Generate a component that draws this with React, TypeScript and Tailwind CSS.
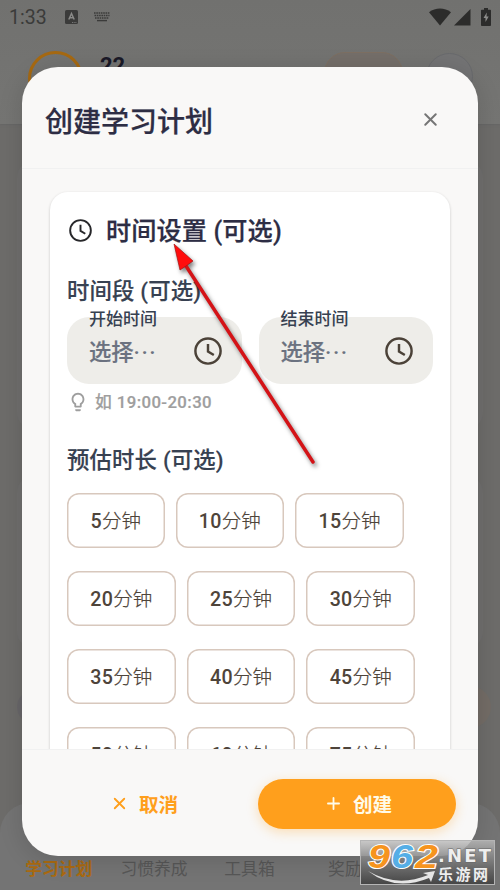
import { Plus, X } from 'lucide-react';
import { MdLightbulbOutline } from 'react-icons/md';

const durations = [
  ['5', '10', '15'],
  ['20', '25', '30'],
  ['35', '40', '45'],
  ['50', '60', '75'],
];

const tabs = ['学习计划', '习惯养成', '工具箱', '奖励', '我的'];

function ClockIcon({ className, stroke = 2 }: { className?: string; stroke?: number }) {
  return (
    <svg viewBox="0 0 24 24" fill="none" stroke="currentColor" strokeWidth={stroke} className={className}>
      <circle cx="12" cy="12" r="10.8" />
      <path d="M12 6v6.400l5 3" />
    </svg>
  );
}

function StatusBar() {
  return (
    <div className="flex h-[34px] items-center pl-[9px] pr-[9px] text-[#3b3b3a]">
      <span className="mt-px w-[56px] text-[19.500px] leading-none">1:33</span>
      <svg width="13" height="14" viewBox="0 0 13 14">
        <rect width="13" height="14" rx="1.5" fill="currentColor" />
        <path d="M3.800 9.500 6.500 3.500 9.200 9.500M4.800 7.800h3.400" fill="none" stroke="#8a8a88" strokeWidth="1.5" />
        <path d="M7 12.500h5" stroke="#777" strokeWidth="1" strokeDasharray="1 .7" />
      </svg>
      <svg width="18" height="10" viewBox="0 0 18 10" className="ml-[15px]">
        <path d="M1 1h16M1.500 3.500h15M2 6h14" stroke="currentColor" strokeWidth="1.7" strokeDasharray="1.6 .7" />
        <path d="M4 8.600h10" stroke="currentColor" strokeWidth="1.4" />
      </svg>
      <div className="ml-auto flex items-center text-[#2c2c2b]">
        <svg width="22" height="18" viewBox="0 0 22 18">
          <path d="M0 4.200C6.500-.8 15.500-.8 22 4.200L11 17.500Z" fill="currentColor" />
        </svg>
        <svg width="17" height="17" viewBox="0 0 17 17" className="ml-[3px]">
          <path d="M0 16.500 16.500 0v16.500Z" fill="currentColor" />
        </svg>
        <svg width="10" height="18" viewBox="0 0 10 18" className="ml-[10px]">
          <path d="M3 0h4v1.700h2.200q.8 0 .8.8V17q0 1-.8 1H.8Q0 18 0 17V2.500q0-.8.8-.8H3Z" fill="currentColor" />
          <path d="M5.800 4.500 2.500 10h2v4L7.700 8.500H5.500Z" fill="#8d8d8b" />
        </svg>
      </div>
    </div>
  );
}

function Background() {
  return (
    <div className="flex h-full flex-col bg-[#6d6c6a]">
      <header className="h-[124px] shrink-0 bg-linear-to-b from-[#71716f] to-[#757573] shadow-[0_1px_2px_#666]">
        <StatusBar />
        <div className="flex pl-[28px] pr-[27px] pt-[17px]">
          <div className="size-[55px] rounded-full border-[3px] border-[#a66912]" />
          <div className="ml-[17px] mt-[2px] text-[22px] font-bold leading-[26px] text-[#1a1927]">22</div>
          <div className="ml-auto mt-px h-[42px] w-[79px] rounded-full border border-[#7d6f62] bg-[#746e69]" />
          <div className="ml-[23px] mt-[2px] size-[47px] rounded-full border border-[#696a6d] bg-[#737374]" />
        </div>
      </header>
      <main className="flex flex-1 flex-col px-[17px] pt-[36px]">
        <div className="h-[270px] rounded-[18px] bg-[#706f6e]" />
        <div className="mt-[45px] h-[174px] rounded-[18px] bg-[#706f6e]" />
        <div className="-mr-[8px] mt-[37px] flex items-center justify-between">
          <div className="size-[34px] rounded-full bg-[#686669]" />
          <div className="size-[42px] rounded-full bg-[#736c66]" />
        </div>
      </main>
      <nav className="grid h-[87px] shrink-0 grid-cols-5 items-end rounded-t-[30px] bg-[#747474] pb-[9px] pl-[11px] pr-[12px] text-center text-[16.800px] leading-[24px] text-[#575757]">
        {tabs.map((tab, i) => (
          <span key={tab} className={i === 0 ? 'font-bold text-[#aa6a10]' : ''}>{tab}</span>
        ))}
      </nav>
    </div>
  );
}

function TimeField({ label }: { label: string }) {
  return (
    <div className="relative flex h-[67px] w-[175px] items-center justify-between rounded-[22px] bg-[#eeede9] pl-[22px] pr-[20px]">
      <span className="absolute -top-[10px] left-[22px] text-[17px] font-medium leading-[24px] text-[#374151]">{label}</span>
      <span className="mt-[3px] text-[22.300px] font-medium leading-[30px] text-[#6b7280] [-webkit-text-stroke:0.2px]">
        选择<span className="tracking-[1.500px] [-webkit-text-stroke:0]">···</span>
      </span>
      <ClockIcon className="size-[28px] text-[#4b4238]" stroke={2.100} />
    </div>
  );
}

// site badge in the bottom right corner
function SiteBadge() {
  return (
    <div className="absolute left-[360px] top-[840px] h-[45px] w-[135px] border border-[#b5b5b5] bg-linear-to-b from-[#bbbbbb]/80 to-[#464646]">
      <svg width="133" height="43" viewBox="0 0 133 43">
        <path d="M7 30q29 17 60 4l-5-2 12-2-4 11-2-4Q34 51 7 30Z" fill="#e5e5e5" />
        <g fontFamily="Liberation Sans" fontWeight="bold" fontStyle="italic" fontSize="33" stroke="#fff" strokeWidth="2" paintOrder="stroke">
          <text x="7" y="27" fill="#f6941e" textLength="22" lengthAdjust="spacingAndGlyphs">9</text>
          <text x="30" y="27" fill="#55aee6" textLength="22" lengthAdjust="spacingAndGlyphs">6</text>
          <text x="54" y="27" fill="#f6941e" textLength="23" lengthAdjust="spacingAndGlyphs">2</text>
        </g>
        <text x="77" y="21" fill="#eee" fontFamily="DejaVu Sans" fontWeight="bold" fontSize="18" textLength="53" stroke="#666" strokeWidth="1" paintOrder="stroke">.NET</text>
        <text x="77" y="39" fill="#eee" fontFamily="Noto Sans CJK SC" fontWeight="bold" fontSize="15" textLength="50">乐游网</text>
      </svg>
    </div>
  );
}

export default function App() {
  return (
    <div className="relative h-[890px] w-[500px] overflow-hidden font-['Roboto','Noto_Sans_CJK_SC',sans-serif]">
      <Background />

      {/* Create plan dialog */}
      <div className="absolute left-[22px] top-[67px] flex h-[789px] w-[456px] flex-col overflow-hidden rounded-[36px] bg-[#f9f8f7] shadow-[0_4px_24px_rgba(0,0,0,0.14)]">
        <div className="flex h-[102px] shrink-0 items-center justify-between border-b border-[#f1f1f1] pl-[23px] pr-[37px]">
          <h1 className="mt-[11px] text-[28px] font-medium leading-[40px] text-[#2d2d44] [-webkit-text-stroke:0.25px]">创建学习计划</h1>
          <X className="mt-[4px] size-[21px] text-[#757575]" strokeWidth={2.300} />
        </div>

        <div className="flex-1 overflow-hidden px-[28px] pt-[23px]">
          <section className="h-[620px] rounded-[18px] bg-white px-[17px] shadow-[0_1px_3px_rgba(0,0,0,0.2)]">
            <div className="flex h-[76px] items-center gap-[14px] pl-[2px]">
              <ClockIcon className="size-[23px] text-[#27272a]" stroke={2} />
              <h2 className="mt-[3px] text-[25.200px] font-medium leading-[36px] tracking-[0.1px] text-[#2d2d44] [-webkit-text-stroke:0.25px]">时间设置 (可选)</h2>
            </div>
            <h3 className="mt-[6px] text-[22.400px] font-medium leading-[34px] tracking-[0.150px] text-[#374151] [-webkit-text-stroke:0.150px]">时间段 (可选)</h3>
            <div className="mt-[9px] flex gap-[17px]">
              <TimeField label="开始时间" />
              <TimeField label="结束时间" />
            </div>
            <div className="mt-[6px] flex h-[24px] items-center text-[#9e9e9e]">
              <MdLightbulbOutline className="size-[22px]" />
              <span className="ml-[6px] text-[16.800px] font-medium leading-[24px] tracking-[0.4px] [-webkit-text-stroke:0.2px]">如 19:00-20:30</span>
            </div>
            <h3 className="mt-[29px] text-[22.400px] font-medium leading-[34px] tracking-[0.150px] text-[#374151] [-webkit-text-stroke:0.150px]">预估时长 (可选)</h3>
            <div className="mt-[16px] flex flex-col gap-[23px]">
              {durations.map((row) => (
                <div key={row[0]} className="flex gap-[11px]">
                  {row.map((m) => (
                    <button
                      key={m}
                      className={`h-[55px] rounded-[12px] pt-[2px] text-[19.600px] font-medium text-[#4e443a] shadow-[inset_0_0_0_1.500px_#d8c8bd] ${m === '5' ? 'w-[97.500px]' : 'w-[108.700px]'}`}
                    >
                      <span className="tracking-[0.3px]">{m}</span><span className="font-light [-webkit-text-stroke:0.2px]">分钟</span>
                    </button>
                  ))}
                </div>
              ))}
            </div>
          </section>
        </div>

        <div className="flex h-[107px] shrink-0 items-center gap-[17px] border-t border-[#f1f1f1] pl-[25px] pr-[22px] pt-px text-[19.600px] font-bold">
          <button className="flex h-[50px] flex-1 items-center justify-center gap-[10px] text-[#ff9f1c]">
            <X className="size-[19px]" strokeWidth={2.3} />
            <span className="mt-[5px]">取消</span>
          </button>
          <button className="flex h-[50px] w-[198px] items-center justify-center gap-[10px] rounded-full bg-[#ff9f1c] pl-[2px] text-[#fffbe8] shadow-[0_3px_12px_rgba(255,159,28,0.3)]">
            <Plus className="size-[19px]" strokeWidth={2.3} />
            <span className="mt-[5px]">创建</span>
          </button>
        </div>
      </div>

      {/* Pointer arrow */}
      <svg className="pointer-events-none absolute left-[160px] top-[235px] drop-shadow-[2px_3px_2px_rgba(0,0,0,0.5)]" width="170" height="240" viewBox="0 0 170 240">
        <path d="M26 31 153 227" stroke="#d41317" strokeWidth="3.500" strokeLinecap="round" />
        <path d="M14 9 20 35 26 31 33 26Z" fill="#ff0d0d" stroke="#a31414" strokeWidth=".7" />
      </svg>

      <SiteBadge />
    </div>
  );
}
